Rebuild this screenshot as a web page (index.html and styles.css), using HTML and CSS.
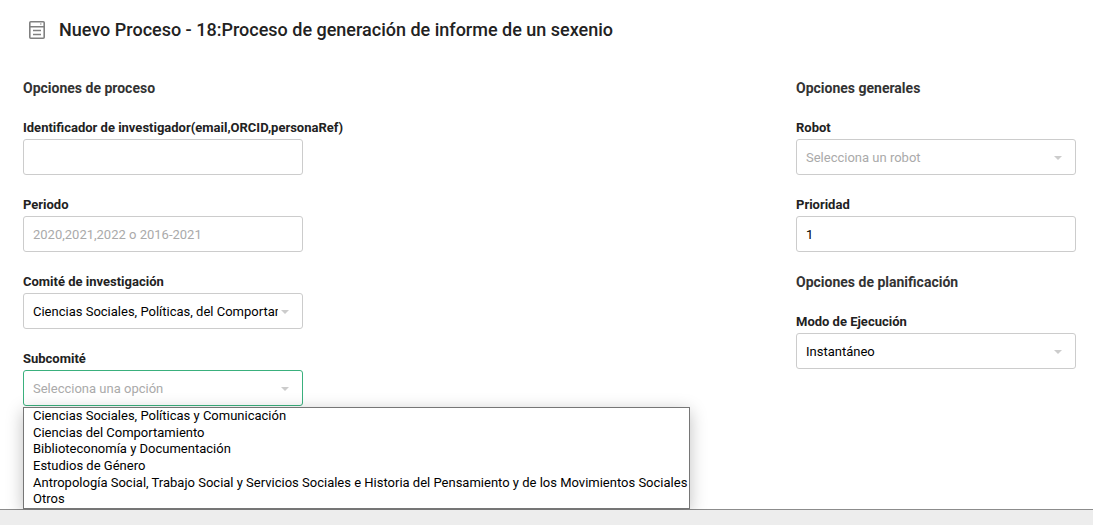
FILE: index.html
```html
<!DOCTYPE html>
<html lang="es">
<head>
<meta charset="utf-8">
<meta name="viewport" content="width=device-width, initial-scale=1">
<title>Nuevo Proceso</title>
<link rel="stylesheet" href="styles.css">
</head>
<body class="page">
<main class="panel">
  <header class="panel-header">
    <svg class="panel-icon" viewBox="0 0 16 18" fill="none" stroke="#808080" stroke-width="1.6" aria-hidden="true">
      <rect x=".8" y=".8" width="14.4" height="16.4" rx="1"/>
      <path d="M1 5.7h14M4 9.5h8M4 13.5h8"/>
      <path d="M11 3h1.5" stroke-width="1"/>
    </svg>
    <h1 class="panel-title">Nuevo Proceso - 18:Proceso de generación de informe de un sexenio</h1>
  </header>
  <form class="form">
    <div class="column">
      <h2 class="section-title">Opciones de proceso</h2>
      <div class="field">
        <label class="label" for="investigador">Identificador de investigador(email,ORCID,personaRef)</label>
        <input class="control" id="investigador" type="text">
      </div>
      <div class="field">
        <label class="label" for="periodo">Periodo</label>
        <input class="control" id="periodo" type="text" placeholder="2020,2021,2022 o 2016-2021">
      </div>
      <div class="field">
        <label class="label" for="comite">Comité de investigación</label>
        <div class="select-wrap">
          <select class="control select" id="comite"><option>Ciencias Sociales, Políticas, del Comportamiento y de la Educación</option></select>
          <svg class="caret" viewBox="0 0 8 4" aria-hidden="true"><path d="M0 0h8L4 4z"/></svg>
        </div>
      </div>
      <div class="field">
        <label class="label" for="subcomite">Subcomité</label>
        <div class="select-wrap">
          <select class="control select select-empty select-open" id="subcomite"><option>Selecciona una opción</option></select>
          <svg class="caret" viewBox="0 0 8 4" aria-hidden="true"><path d="M0 0h8L4 4z"/></svg>
          <ul class="menu" role="listbox" aria-label="Subcomité">
            <li class="menu-item" role="option">Ciencias Sociales, Políticas y Comunicación</li>
            <li class="menu-item" role="option">Ciencias del Comportamiento</li>
            <li class="menu-item" role="option">Biblioteconomía y Documentación</li>
            <li class="menu-item" role="option">Estudios de Género</li>
            <li class="menu-item" role="option">Antropología Social, Trabajo Social y Servicios Sociales e Historia del Pensamiento y de los Movimientos Sociales</li>
            <li class="menu-item" role="option">Otros</li>
          </ul>
        </div>
      </div>
    </div>
    <div class="column">
      <h2 class="section-title">Opciones generales</h2>
      <div class="field">
        <label class="label" for="robot">Robot</label>
        <div class="select-wrap">
          <select class="control select select-empty" id="robot"><option>Selecciona un robot</option></select>
          <svg class="caret" viewBox="0 0 8 4" aria-hidden="true"><path d="M0 0h8L4 4z"/></svg>
        </div>
      </div>
      <div class="field">
        <label class="label" for="prioridad">Prioridad</label>
        <input class="control" id="prioridad" type="text" value="1">
      </div>
      <h2 class="section-title">Opciones de planificación</h2>
      <div class="field">
        <label class="label" for="modo">Modo de Ejecución</label>
        <div class="select-wrap">
          <select class="control select" id="modo"><option>Instantáneo</option></select>
          <svg class="caret" viewBox="0 0 8 4" aria-hidden="true"><path d="M0 0h8L4 4z"/></svg>
        </div>
      </div>
    </div>
  </form>
</main>
</body>
</html>
```
FILE: styles.css
```css
*,
*::before,
*::after {
  box-sizing: border-box;
}

.page {
  margin: 0;
  background: #ededed;
  color: #222;
  font-family: Roboto, "Liberation Sans", sans-serif;
  font-size: 13px;
}

.panel {
  padding: 18px 17px 103px 23px;
  border-bottom: 1px solid #8c8c8c;
  background: #fff;
  box-shadow: 0 1px 2px #bbb;
}

.panel-header {
  display: flex;
  align-items: center;
  gap: 14px;
  padding-left: 6px;
}

.panel-icon {
  width: 16px;
  height: 18px;
}

.panel-title {
  margin: 0;
  color: #222;
  font-size: 18px;
  font-weight: 500;
  line-height: 24px;
}

.form {
  display: flex;
  justify-content: space-between;
  gap: 40px;
  margin-top: 36px;
}

.column {
  display: flex;
  flex-direction: column;
  gap: 20px;
  width: 280px;
}

.section-title {
  margin: 0;
  color: #333;
  font-size: 14px;
  font-weight: 700;
  line-height: 20px;
}

.field {
  display: flex;
  flex-direction: column;
  gap: 1px;
}

.label {
  font-weight: 700;
  font-size: 13px;
  line-height: 20px;
  white-space: nowrap;
}

.control {
  display: block;
  width: 100%;
  height: 36px;
  padding: 0 9px;
  border: 1px solid #ccc;
  border-radius: 3px;
  outline: 0;
  background: #fff;
  color: #000;
  font: inherit;
}

.control::placeholder {
  color: #aaa;
  opacity: 1;
}

.select-wrap {
  position: relative;
}

.select {
  appearance: none;
  padding-right: 24px;
}

.select-empty {
  color: #aaa;
}

.select-open {
  border-color: #3ab07d;
}

.caret {
  position: absolute;
  top: 17px;
  right: 14px;
  width: 8px;
  height: 4px;
  fill: #ccc;
  pointer-events: none;
}

.menu {
  position: absolute;
  top: calc(100% + 1px);
  left: 0;
  display: grid;
  grid-auto-rows: 1fr;
  height: 102px;
  margin: 0;
  padding: 0 2px 0 9px;
  border: 1px solid #767676;
  background: #fff;
  box-shadow: 0 4px 16px rgba(0, 0, 0, 0.25);
  color: #000;
  list-style: none;
}

.menu-item {
  line-height: 16px;
  white-space: nowrap;
}
```
